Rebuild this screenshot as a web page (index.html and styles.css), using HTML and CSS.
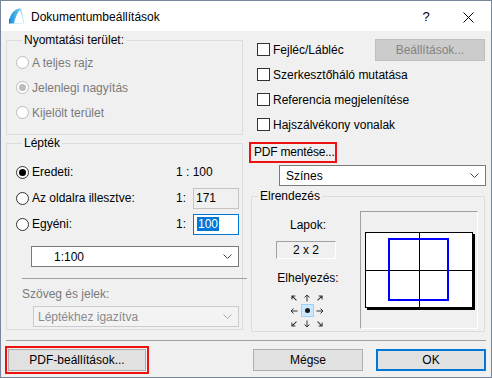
FILE: index.html
```html
<!DOCTYPE html>
<html lang="hu">
<head>
  <meta charset="UTF-8">
  <title>Dokumentumbeállítások</title>
  <link rel="stylesheet" href="styles.css">
</head>
<body>

  <div class="window">
    <div class="titlebar">
      <svg class="app-icon" width="16" height="16" viewBox="0 0 16 16">
        <defs>
          <linearGradient id="ac" x1="0" y1="0" x2="1" y2="0">
            <stop offset="0" stop-color="#1e8fd6"/>
            <stop offset="0.6" stop-color="#5fc0ee"/>
            <stop offset="1" stop-color="#d4f0fb"/>
          </linearGradient>
        </defs>
        <path d="M0.5 15.5 L0.5 11 Q3 2 10 0.5 L12 0.5 Q14 8 15.5 15.5 Z" fill="url(#ac)"/>
        <path d="M5 15.5 Q7 6 11 2 Q13.5 9 14.5 15.5 Z" fill="#fff"/>
        <path d="M0.5 15.5 L0.5 11" stroke="#2a6fa8" stroke-width="1"/>
      </svg>
      <span class="title">Dokumentumbeállítások</span>
      <span class="help-btn">?</span>
      <span class="close-btn">
        <svg width="11" height="11" viewBox="0 0 11 11">
          <path d="M0.5 0.5 L10.5 10.5 M10.5 0.5 L0.5 10.5" stroke="#000" stroke-width="1"/>
        </svg>
      </span>
    </div>

    <div class="content">
      <div class="columns">

        <!-- left side -->
        <div class="col-left">
          <fieldset class="group area-group">
            <legend>Nyomtatási terület:</legend>
            <div class="radio-row disabled"><span class="radio"></span>A teljes rajz</div>
            <div class="radio-row disabled"><span class="radio checked"></span>Jelenlegi nagyítás</div>
            <div class="radio-row disabled"><span class="radio"></span>Kijelölt terület</div>
          </fieldset>

          <fieldset class="group scale-group">
            <legend>Lépték</legend>
            <div class="scale-row">
              <div class="radio-row"><span class="radio checked"></span>Eredeti:</div>
              <span class="ratio">1 : 100</span>
            </div>
            <div class="scale-row">
              <div class="radio-row"><span class="radio"></span>Az oldalra illesztve:</div>
              <span class="ratio">1:</span>
              <span class="field readonly">171</span>
            </div>
            <div class="scale-row">
              <div class="radio-row"><span class="radio"></span>Egyéni:</div>
              <span class="ratio">1:</span>
              <span class="field focused"><span class="selected">100</span></span>
            </div>
            <div class="dropdown scale-select">
              <span>1:100</span>
              <svg class="chevron" width="9" height="5" viewBox="0 0 9 5"><path d="M0.5 0.5 L4.5 4.5 L8.5 0.5" fill="none" stroke="#444"/></svg>
            </div>
            <div class="rule"></div>
            <div class="sub-label">Szöveg és jelek:</div>
            <div class="dropdown disabled text-select">
              <span>Léptékhez igazítva</span>
              <svg class="chevron" width="9" height="5" viewBox="0 0 9 5"><path d="M0.5 0.5 L4.5 4.5 L8.5 0.5" fill="none" stroke="#a8a8a8"/></svg>
            </div>
          </fieldset>
        </div>

        <!-- right side -->
        <div class="col-right">
          <div class="check-row">
            <span class="checkbox"></span>Fejléc/Lábléc
            <span class="btn disabled settings-btn">Beállítások...</span>
          </div>
          <div class="check-row"><span class="checkbox"></span>Szerkesztőháló mutatása</div>
          <div class="check-row"><span class="checkbox"></span>Referencia megjelenítése</div>
          <div class="check-row"><span class="checkbox"></span>Hajszálvékony vonalak</div>

          <div class="pdf-save">PDF mentése...</div>
          <div class="dropdown color-select">
            <span>Színes</span>
            <svg class="chevron" width="9" height="5" viewBox="0 0 9 5"><path d="M0.5 0.5 L4.5 4.5 L8.5 0.5" fill="none" stroke="#444"/></svg>
          </div>

          <fieldset class="group layout-group">
            <legend>Elrendezés</legend>
            <div class="layout-body">
              <div class="layout-info">
                <div class="info-label">Lapok:</div>
                <div class="pages-box">2 x 2</div>
                <div class="info-label place-label">Elhelyezés:</div>
                <div class="anchor-pad">
                  <span class="cell"><svg class="arrow r-45" viewBox="0 0 8 8"><path d="M4 7.5 V1 M1.5 3.5 L4 1 L6.5 3.5"/></svg></span>
                  <span class="cell"><svg class="arrow" viewBox="0 0 8 8"><path d="M4 7.5 V1 M1.5 3.5 L4 1 L6.5 3.5"/></svg></span>
                  <span class="cell"><svg class="arrow r45" viewBox="0 0 8 8"><path d="M4 7.5 V1 M1.5 3.5 L4 1 L6.5 3.5"/></svg></span>
                  <span class="cell"><svg class="arrow r-90" viewBox="0 0 8 8"><path d="M4 7.5 V1 M1.5 3.5 L4 1 L6.5 3.5"/></svg></span>
                  <span class="cell active"><span class="dot"></span></span>
                  <span class="cell"><svg class="arrow r90" viewBox="0 0 8 8"><path d="M4 7.5 V1 M1.5 3.5 L4 1 L6.5 3.5"/></svg></span>
                  <span class="cell"><svg class="arrow r-135" viewBox="0 0 8 8"><path d="M4 7.5 V1 M1.5 3.5 L4 1 L6.5 3.5"/></svg></span>
                  <span class="cell"><svg class="arrow r180" viewBox="0 0 8 8"><path d="M4 7.5 V1 M1.5 3.5 L4 1 L6.5 3.5"/></svg></span>
                  <span class="cell"><svg class="arrow r135" viewBox="0 0 8 8"><path d="M4 7.5 V1 M1.5 3.5 L4 1 L6.5 3.5"/></svg></span>
                </div>
              </div>
              <div class="preview">
                <svg width="116" height="116" viewBox="0 0 116 116">
                  <rect x="6" y="22" width="108" height="76" fill="#000"/>
                  <rect x="4.5" y="20.5" width="107" height="75" fill="#fff" stroke="#000"/>
                  <path d="M58.5 20.5 V95.5 M4.5 58.5 H111.5" stroke="#000"/>
                  <rect x="28" y="27" width="59" height="61" fill="none" stroke="#0000ff" stroke-width="2"/>
                </svg>
              </div>
            </div>
          </fieldset>
        </div>
      </div>

      <div class="separator"></div>

      <div class="buttons">
        <span class="btn pdf-settings">PDF-beállítások...</span>
        <span class="spacer"></span>
        <span class="btn">Mégse</span>
        <span class="btn default">OK</span>
      </div>
    </div>
  </div>

</body>
</html>
```

FILE: styles.css
```css
/* General */
body {
  margin: 0;
  font-family: 'Liberation Sans', Arial, sans-serif;
  font-size: 12px;
  color: #000;
  background: #f0f0f0;
}

.window {
  width: 492px;
  height: 378px;
  box-sizing: border-box;
  border: 1px solid #77869a;
  border-top: none;
  background: #f0f0f0;
  display: flex;
  flex-direction: column;
  white-space: nowrap;
}

/* Title bar */
.titlebar {
  height: 31px;
  box-sizing: border-box;
  border-top: 1px solid #77869a;
  background: #fff;
  display: flex;
  align-items: center;
}

.app-icon {
  margin-left: 8px;
  margin-top: -1px;
}

.title {
  margin-left: 6px;
  margin-top: 1px;
}

.help-btn {
  margin-left: auto;
  width: 38px;
  padding-left: 8px;
  text-align: center;
  font-size: 13px;
}

.close-btn {
  width: 46px;
  display: flex;
  justify-content: center;
  margin-top: 2px;
}

/* Content */
.content {
  padding: 0 5px;
  flex: 1;
}

.columns {
  display: flex;
  gap: 6px;
  padding-top: 2px;
}

.col-left,
.col-right {
  width: 237px;
}

/* Group boxes */
.group {
  margin: 0;
  padding: 0;
  border: 1px solid #dcdcdc;
  min-width: 0;
}

.group legend {
  margin-left: 6px;
  padding: 0 2px;
  line-height: 14px;
}

.area-group {
  padding: 3px 0 9px 9px;
}

.scale-group {
  margin-top: 1px;
  padding: 9px 3px 2px 9px;
}

/* Radios & checkboxes */
.radio-row {
  display: flex;
  align-items: center;
  height: 25px;
}

.radio {
  width: 13px;
  height: 13px;
  box-sizing: border-box;
  border: 1px solid #333;
  border-radius: 50%;
  background: #fff;
  margin-right: 3px;
  display: flex;
  align-items: center;
  justify-content: center;
}

.radio.checked::after {
  content: '';
  width: 7px;
  height: 7px;
  border-radius: 50%;
  background: #000;
}

.radio-row.disabled {
  color: #7a7a7a;
}

.radio-row.disabled .radio {
  border-color: #bcbcbc;
}

.radio-row.disabled .radio.checked::after {
  background: #bcbcbc;
}

.check-row {
  display: flex;
  align-items: center;
  height: 25px;
  padding-left: 8px;
}

.checkbox {
  width: 13px;
  height: 13px;
  box-sizing: border-box;
  border: 1px solid #333;
  background: #fff;
  margin-right: 3px;
}

.col-right {
  padding-top: 4px;
}

/* Scale rows */
.scale-row {
  display: flex;
  align-items: center;
  height: 26px;
}

.scale-row .radio-row {
  width: 160px;
}

.ratio {
  min-width: 17px;
}

.field {
  width: 46px;
  height: 21px;
  box-sizing: border-box;
  display: flex;
  align-items: center;
  padding-left: 2px;
}

.field.readonly {
  background: #f0f0f0;
  border: 1px solid #c4c4c4;
}

.field.focused {
  background: #fff;
  border: 1px solid #0078d7;
  padding-left: 3px;
}

.selected {
  background: #0078d7;
  color: #fff;
  padding: 0 1px;
  line-height: 14px;
}

/* Dropdowns */
.dropdown {
  height: 21px;
  box-sizing: border-box;
  border: 1px solid #7a7a7a;
  background: #fff;
  display: flex;
  align-items: center;
  justify-content: space-between;
  padding-right: 6px;
}

.dropdown.disabled {
  border-color: #cccccc;
  background: #f3f3f3;
  color: #8a8a8a;
}

.scale-select {
  margin: 9px 0 0 15px;
  width: 208px;
  padding-left: 22px;
}

.rule {
  height: 1px;
  background: #a0a0a0;
  margin: 11px 0 0 6px;
  width: 225px;
}

.sub-label {
  margin: 8px 0 0 6px;
  line-height: 14px;
  color: #7a7a7a;
}

.text-select {
  margin: 5px 0 0 17px;
  width: 206px;
  padding-left: 4px;
}

/* Right side */
.settings-btn {
  margin-left: auto;
  margin-right: 1px;
}

.pdf-save {
  margin-top: 5px;
  width: 88px;
  height: 21px;
  box-sizing: border-box;
  border: 2px solid #ee1111;
  padding-left: 3px;
  line-height: 17px;
  letter-spacing: -0.2px;
}

.color-select {
  margin: 2px 0 0 30px;
  width: 207px;
  padding-left: 6px;
}

.layout-group {
  margin: 3px 1px 0 2px;
  padding: 8px 6px 1px 0;
}

.layout-body {
  display: flex;
}

.layout-info {
  width: 109px;
  display: flex;
  flex-direction: column;
  align-items: center;
}

.info-label {
  margin-top: 7px;
  line-height: 14px;
  padding-left: 4px;
}

.pages-box {
  margin-top: 9px;
  width: 60px;
  height: 18px;
  box-sizing: border-box;
  border: 1px solid;
  border-color: #a0a0a0 #fff #fff #a0a0a0;
  text-align: center;
  line-height: 16px;
}

.place-label {
  margin-top: 12px;
}

.anchor-pad {
  margin-top: 6px;
  margin-left: 2px;
  display: grid;
  grid-template-columns: repeat(3, 13px);
  grid-template-rows: repeat(3, 13px);
}

.cell {
  display: flex;
  align-items: center;
  justify-content: center;
}

.cell.active {
  box-sizing: border-box;
  background: #cce8ff;
  border: 1px solid #99d1ff;
}

.dot {
  width: 5px;
  height: 5px;
  border-radius: 50%;
  background: #1a1a1a;
}

.arrow {
  width: 8px;
  height: 8px;
  fill: none;
  stroke: #333;
  stroke-width: 1;
}

.r45 { transform: rotate(45deg); }
.r90 { transform: rotate(90deg); }
.r135 { transform: rotate(135deg); }
.r180 { transform: rotate(180deg); }
.r-45 { transform: rotate(-45deg); }
.r-90 { transform: rotate(-90deg); }
.r-135 { transform: rotate(-135deg); }

.preview {
  width: 118px;
  height: 118px;
  box-sizing: border-box;
  border: 1px solid;
  border-color: #a0a0a0 #fff #fff #a0a0a0;
}

.preview svg {
  display: block;
}

/* Bottom */
.separator {
  height: 1px;
  background: #a0a0a0;
  margin-top: 8px;
}

.buttons {
  display: flex;
  margin-top: 8px;
  gap: 13px;
}

.spacer {
  flex: 1;
}

.btn {
  width: 110px;
  height: 22px;
  box-sizing: border-box;
  background: #e1e1e1;
  border: 1px solid #adadad;
  display: flex;
  align-items: center;
  justify-content: center;
}

.btn.disabled {
  background: #cccccc;
  border-color: #bfbfbf;
  color: #838383;
}

.btn.default {
  border: 2px solid #0078d7;
}

.pdf-settings {
  width: 138px;
  margin-left: 2px;
  outline: 2px solid #ee1111;
  outline-offset: 1px;
}
```
